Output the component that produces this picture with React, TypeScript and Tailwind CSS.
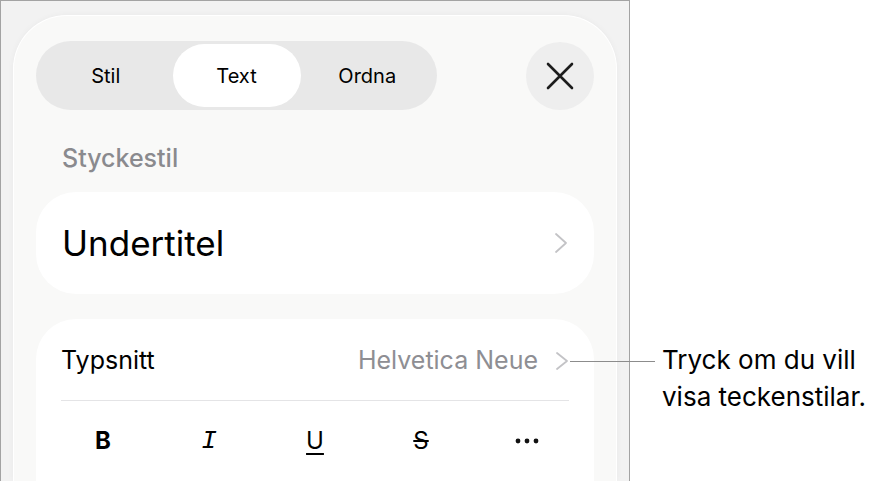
const tabs = ['Stil', 'Text', 'Ordna'];

const Chevron = ({ h = 22 }: { h?: number }) => (
    <svg width="14" height={h} viewBox={`0 0 14 ${h}`} fill="none">
        <polyline points={`2,2 12,${h / 2} 2,${h - 2}`} stroke="#c3c3c6" strokeWidth="1.8" strokeLinecap="round" strokeLinejoin="round" />
    </svg>
);

const CloseIcon = () => (
    <svg width="28" height="28" viewBox="0 0 28 28" fill="none">
        <path d="M2 2 L26 26 M26 2 L2 26" stroke="#1c1c1c" strokeWidth="2.6" strokeLinecap="round" />
    </svg>
);

const Dots = () => (
    <svg width="24" height="6" viewBox="0 0 24 6">
        <circle cx="3" cy="3" r="2.4" fill="#111" />
        <circle cx="12" cy="3" r="2.4" fill="#111" />
        <circle cx="21" cy="3" r="2.4" fill="#111" />
    </svg>
);

export default function App() {
    return (
        <div className="relative flex h-[481px] w-[889px] overflow-hidden bg-white font-['Inter',sans-serif] text-black">

            {/* Device frame */}
            <div className="flex h-full w-[630px] shrink-0 border-x border-t border-[#a3a3a3] bg-[#f2f2f2] px-[12px] pt-[14px]">
                <div className="flex flex-1 flex-col rounded-t-[54px] border border-b-0 border-white bg-[#f9f9f8] px-[22px] pt-[25px] shadow-[0_0_6px_rgba(0,0,0,0.04)]">

                    {/* Tab bar + close */}
                    <div className="flex items-center justify-between">
                        <div className="flex h-[69px] w-[401px] items-center rounded-full bg-[#e8e8e8] px-[3px]">
                            {tabs.map((t) => (
                                <div
                                    key={t}
                                    className={
                                        t === 'Text'
                                            ? 'flex h-[63px] w-[128px] items-center justify-center rounded-full bg-white text-[20px]'
                                            : 'flex h-[63px] flex-1 items-center justify-center text-[20px]'
                                    }
                                >
                                    {t}
                                </div>
                            ))}
                        </div>
                        <div className="flex h-[68px] w-[68px] items-center justify-center rounded-full bg-[#eeeeee]">
                            <CloseIcon />
                        </div>
                    </div>

                    {/* Paragraph style */}
                    <div className="mt-[36px] pl-[26px] text-[25px] font-medium leading-[24px] text-[#8a8a8e]">Styckestil</div>
                    <div className="mt-[22px] flex h-[104px] items-center justify-between rounded-[40px] bg-white pl-[26px] pr-[26px]">
                        <span className="text-[35px] leading-none">Undertitel</span>
                        <Chevron />
                    </div>

                    {/* Font card */}
                    <div className="mt-[25px] flex-1 rounded-t-[40px] bg-white px-[25px]">
                        <div className="flex h-[81px] items-center justify-between pt-[2px]">
                            <span className="text-[25px]">Typsnitt</span>
                            <div className="flex items-center gap-[17px]">
                                <span className="text-[25px] text-[#8e8e93]">Helvetica Neue</span>
                                <Chevron h={20} />
                            </div>
                        </div>
                        <div className="h-px bg-[#e4e4e6]" />
                        <div className="flex h-[80px] items-center justify-between px-[30px] text-[24px]">
                            <span className="w-[24px] text-center font-bold">B</span>
                            <span className="w-[24px] text-center font-['Liberation_Mono',monospace] text-[26px] italic">I</span>
                            <span className="w-[24px] text-center underline decoration-[1.5px] underline-offset-[4px]">U</span>
                            <span className="w-[24px] text-center line-through decoration-[1.5px]">S</span>
                            <span className="flex w-[24px] justify-center"><Dots /></span>
                        </div>
                    </div>
                </div>
            </div>

            {/* Callout */}
            <div className="absolute left-[570px] top-[361px] h-px w-[85px] bg-[#8c8c8c]" />
            <div className="absolute left-[662px] top-[341px] text-[26px] leading-[37px]">
                Tryck om du vill
                <br />
                visa teckenstilar.
            </div>
        </div>
    );
}
